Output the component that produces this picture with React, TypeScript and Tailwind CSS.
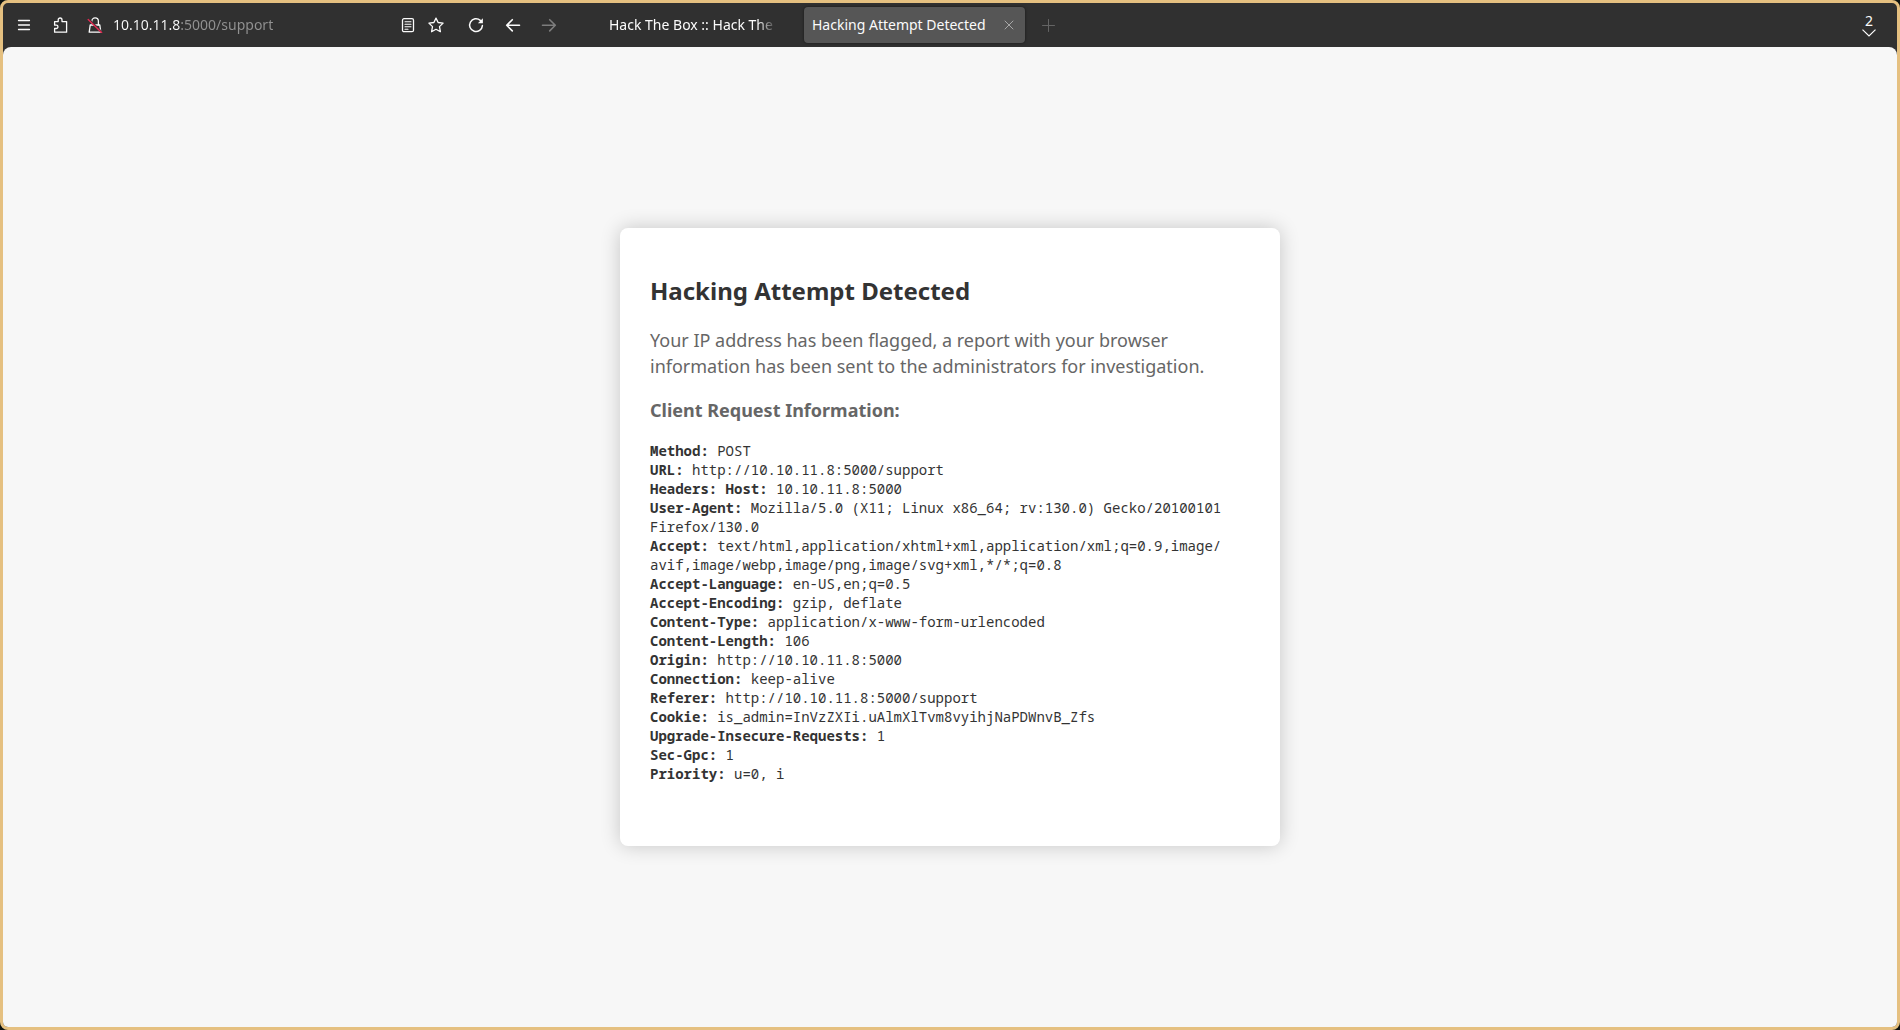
import type { ReactNode } from "react";

const requestLines: { label: string; value: ReactNode }[] = [
  { label: "Method:", value: "POST" },
  { label: "URL:", value: "http://10.10.11.8:5000/support" },
  { label: "Headers: Host:", value: "10.10.11.8:5000" },
  {
    label: "User-Agent:",
    value: "Mozilla/5.0 (X11; Linux x86_64; rv:130.0) Gecko/20100101 Firefox/130.0",
  },
  {
    label: "Accept:",
    value: (
      <>
        text/html,application/xhtml+xml,application/xml;q=0.9,image/
        <wbr />
        avif,image/webp,image/png,image/svg+xml,*/*;q=0.8
      </>
    ),
  },
  { label: "Accept-Language:", value: "en-US,en;q=0.5" },
  { label: "Accept-Encoding:", value: "gzip, deflate" },
  { label: "Content-Type:", value: "application/x-www-form-urlencoded" },
  { label: "Content-Length:", value: "106" },
  { label: "Origin:", value: "http://10.10.11.8:5000" },
  { label: "Connection:", value: "keep-alive" },
  { label: "Referer:", value: "http://10.10.11.8:5000/support" },
  { label: "Cookie:", value: "is_admin=InVzZXIi.uAlmXlTvm8vyihjNaPDWnvB_Zfs" },
  { label: "Upgrade-Insecure-Requests:", value: "1" },
  { label: "Sec-Gpc:", value: "1" },
  { label: "Priority:", value: "u=0, i" },
];

function Icon({ children }: { children: ReactNode }) {
  return (
    <svg
      viewBox="0 0 16 16"
      className="size-4"
      fill="none"
      stroke="currentColor"
      strokeWidth="1.3"
      strokeLinecap="round"
      strokeLinejoin="round"
      aria-hidden="true"
    >
      {children}
    </svg>
  );
}

function BarButton({
  label,
  className,
  children,
}: {
  label: string;
  className: string;
  children: ReactNode;
}) {
  return (
    <button
      type="button"
      aria-label={label}
      className={`flex h-9 shrink-0 items-center justify-center ${className}`}
    >
      {children}
    </button>
  );
}

function Toolbar() {
  return (
    <header className="flex h-11 shrink-0 items-center pr-3 pl-[5px] text-sm text-[#fbfbfb]">
      <BarButton label="Menu" className="w-8">
        <Icon>
          <path d="M2.500 3.500h11M2.500 8h11M2.500 12.500h11" />
        </Icon>
      </BarButton>
      <BarButton label="Extensions" className="ml-[5px] w-8">
        <Icon>
          <path d="M1.600 4.600h3.600V2.900a1.900 1.900 0 0 1 3.800 0v1.700h4.600v10.600h-12v-3.700h1.700a1.600 1.600 0 0 0 0-3.300H1.600z" />
        </Icon>
      </BarButton>
      <form className="ml-0.5 flex w-[371px] shrink-0 items-center">
        <BarButton label="Connection is not secure" className="w-8">
          <Icon>
            <path d="M3.200 8h9.600l1 7.200H2.200z" />
            <path d="M4.800 5.800V4.200a3.300 3.300 0 0 1 6.600 0v3.600" />
            <path d="M1.600 1.900l13.400 13.400" stroke="#303030" strokeWidth="1.800" />
            <path d="M1.200 2.400l13.400 13.200" stroke="#e22850" strokeWidth="1.400" />
          </Icon>
        </BarButton>
        <input
          type="text"
          aria-label="Address"
          defaultValue="10.10.11.8:5000/support"
          className="min-w-0 grow bg-linear-to-r from-[#fbfbfb] from-[69px] to-[#929292] to-[69px] bg-clip-text pl-0.5 text-transparent outline-none"
        />
        <BarButton label="Reader view" className="w-7">
          <Icon>
            <rect x="2.500" y="1.700" width="11" height="13" rx="1.500" />
            <path d="M5 4.800h6M5 7.300h6M5 9.800h6M5 12.200h3" strokeWidth="1.100" />
          </Icon>
        </BarButton>
        <BarButton label="Bookmark this page" className="w-7">
          <Icon>
            <path d="M8 1.100l2.100 4.400 5 .6-3.600 3.500.9 5.100L8 12.300l-4.400 2.400.9-5.100L.9 6.100l5-.6z" />
          </Icon>
        </BarButton>
      </form>
      <BarButton label="Reload" className="ml-2 w-9">
        <Icon>
          <path d="M14.400 8.600A6.400 6.400 0 1 1 12.300 3.400" strokeWidth="1.500" />
          <path d="M14.900 1.200v5h-5z" fill="currentColor" stroke="none" />
        </Icon>
      </BarButton>
      <BarButton label="Back" className="ml-px w-9">
        <Icon>
          <path d="M14.500 8.300H1.800M7.300 2.700L1.700 8.300l5.600 5.600" strokeWidth="1.600" />
        </Icon>
      </BarButton>
      <BarButton label="Forward" className="w-9 text-[#7d7d7d]">
        <Icon>
          <path d="M1.500 8.300h12.700M8.700 2.700l5.600 5.600-5.600 5.600" strokeWidth="1.600" />
        </Icon>
      </BarButton>
      <nav aria-label="Tabs" className="ml-8 flex items-center gap-1">
        <button type="button" className="h-9 w-[201px] pl-2.5 text-left">
          <span className="block w-[168px] overflow-hidden mask-r-from-88% whitespace-nowrap">
            Hack The Box :: Hack The Box
          </span>
        </button>
        <div className="flex h-9 w-[221px] items-center justify-between rounded bg-[#565656] pr-1 pl-2 shadow-[0_0_3px_rgba(0,0,0,0.5)]">
          <button type="button" className="whitespace-nowrap">
            Hacking Attempt Detected
          </button>
          <BarButton label="Close tab" className="w-6 text-[#a8a8a8]">
            <Icon>
              <path d="M4 4l8 8M12 4l-8 8" strokeWidth="1" />
            </Icon>
          </BarButton>
        </div>
      </nav>
      <BarButton label="New tab" className="ml-[5px] w-9 text-[#646464]">
        <Icon>
          <path d="M8.500 2.500v12M2.500 8.500h12" strokeWidth="1" />
        </Icon>
      </BarButton>
      <BarButton label="List all tabs" className="ml-auto w-8 flex-col">
        <span className="leading-4">2</span>
        <svg
          viewBox="0 0 16 8"
          className="h-2 w-4"
          fill="none"
          stroke="currentColor"
          strokeWidth="1.2"
          aria-hidden="true"
        >
          <path d="M1.500 .6L8 7l6.500-6.400" />
        </svg>
      </BarButton>
    </header>
  );
}

export default function App() {
  return (
    <div className="h-screen bg-[#0c1210] font-['Noto_Sans',sans-serif]">
      <div className="flex h-full flex-col overflow-hidden rounded-lg border-3 border-[#e5c080] bg-[#303030]">
        <Toolbar />
        <main className="flex grow items-center justify-center rounded-t-lg bg-[#f7f7f7]">
          <section className="w-full max-w-[660px] rounded-lg bg-white px-[30px] pt-[46px] pb-[63px] shadow-[0_0_20px_rgba(0,0,0,0.2)]">
            <h1 className="text-2xl leading-[34px] font-bold text-[#333333]">
              Hacking Attempt Detected
            </h1>
            <p className="mt-[19px] text-lg leading-[26px] text-[#666666]">
              Your IP address has been flagged, a report with your browser information has been sent
              to the administrators for investigation.
            </p>
            <h2 className="mt-[18px] text-lg leading-[26px] font-bold text-[#666666]">
              Client Request Information:
            </h2>
            <div className="mt-[18px] font-['Noto_Sans_Mono','DejaVu_Sans_Mono',monospace] text-sm leading-[19px] text-[#333333]">
              {requestLines.map((line) => (
                <div key={line.label}>
                  <strong>{line.label}</strong> {line.value}
                </div>
              ))}
            </div>
          </section>
        </main>
      </div>
    </div>
  );
}
